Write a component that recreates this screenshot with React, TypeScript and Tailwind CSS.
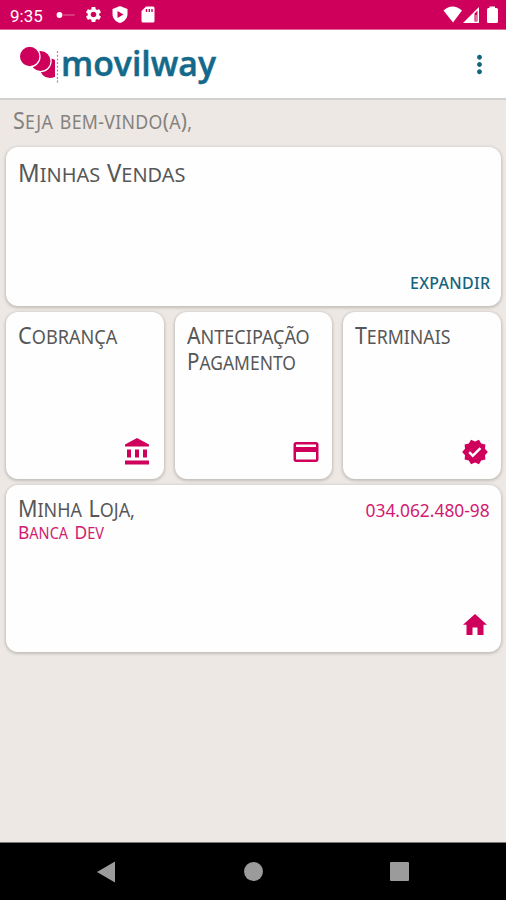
import React from "react";
import { MdCreditCard, MdVerified, MdSettings, MdMoreVert } from "react-icons/md";

const CARD = "bg-[#fefefe] rounded-[12px] shadow-[0_1px_3px_1px_rgba(0,0,0,0.18)]";

// Small-caps heading: each word has a taller first letter.
function Title({ text, className = "" }: { text: string; className?: string }) {
  return (
    <span className={"flex origin-left gap-[7px] uppercase whitespace-nowrap " + className}>
      {text.split(" ").map((word) => (
        <span key={word} className="block first-letter:text-[1.2em]">{word}</span>
      ))}
    </span>
  );
}

function Logo() {
  return (
    <svg width="210" height="48" viewBox="16 40 210 48" className="block">
      <clipPath id="edge"><rect x="16" y="40" width="39" height="48" /></clipPath>
      <g fill="#cf005c" stroke="#fff" strokeWidth="1.2" clipPath="url(#edge)">
        <circle cx="49.800" cy="68.300" r="10.400" />
        <circle cx="40.500" cy="61" r="10.600" />
        <circle cx="29.700" cy="56.500" r="10.300" />
      </g>
      <path d="M57.500 51V83" stroke="#db6c98" strokeWidth="1.2" strokeDasharray="2 1.700" />
      <text x="61" y="75.700" fontFamily="Open Sans, sans-serif" fontSize="33.500" fontWeight="600" fill="#14698a" stroke="#14698a" strokeWidth=".5" strokeLinejoin="round" textLength="155" lengthAdjust="spacingAndGlyphs">movilway</text>
    </svg>
  );
}

export default function App() {
  return (
    <div className="flex h-[900px] w-[506px] flex-col overflow-hidden bg-[#ede8e3] font-['Noto_Sans',sans-serif] text-[#575757]">
      <header className="flex h-[30px] shrink-0 items-center border-b border-[#df6496] bg-[#cf005c] pl-[10px] pr-[7px] text-white">
        <span className="w-[46px] pt-[2px] font-[Roboto,sans-serif] text-[17px] leading-[20px]">9:35</span>
        <svg width="20" height="8" viewBox="0 0 20 8" className="mr-[8px]">
          <circle cx="3.500" cy="4" r="2.900" fill="#fff" />
          <path d="M8 4H18" stroke="#e0508c" strokeWidth="2" strokeLinecap="round" opacity=".7" />
        </svg>
        <MdSettings className="size-[19px]" />
        <svg width="18" height="19" viewBox="0 0 18 19" className="ml-[8px]">
          <path fillRule="evenodd" d="M9 1 16.500 4V9C16.500 13.500 13 17 9 18 5 17 1.500 13.500 1.500 9V4ZM6.500 6V13L12.500 9.500Z" fill="#fff" />
        </svg>
        <svg width="16" height="19" viewBox="0 0 16 19" className="ml-[11px]">
          <path fillRule="evenodd" d="M6 1.500H13Q14.500 1.500 14.500 3V16Q14.500 17.500 13 17.500H3Q1.500 17.500 1.500 16V6ZM5.800 4V7H7.200V4ZM8.600 4V7H10V4ZM11.300 4V7H12.700V4Z" fill="#fff" />
        </svg>
        <svg width="56" height="20" viewBox="443 5 56 20" className="ml-auto">
          <path d="M443.500 10.500Q452.500 2.500 462 10.500L453 22.500Z" fill="#fff" />
          <path fillRule="evenodd" d="M479 7V23H463ZM474.500 13.500V21.500H477.500V10.500Z" fill="#fff" />
          <path d="M475.500 15h1.200v6h-1.200z" fill="#f0a0c2" />
          <path d="M489.500 6.500H495V8H496.500Q498 8 498 9.500V21.500Q498 23 496.500 23H488.500Q487 23 487 21.500V9.500Q487 8 488.500 8H489.500Z" fill="#fff" />
        </svg>
      </header>

      <div className="flex h-[70px] shrink-0 items-center justify-between border-b-2 border-[#d3cfcc] bg-white pl-[16px] pr-[12px]">
        <Logo />
        <MdMoreVert className="size-[29px] text-[#14647f]" />
      </div>

      <div className="h-[47px] shrink-0 pl-[13px] pt-[4px] text-[#85817e]">
        <p className="w-fit origin-left scale-x-[0.935] whitespace-nowrap text-[19px] uppercase leading-[32px] tracking-[0.300px] [word-spacing:2px] first-letter:text-[23px]">
          Seja bem-vindo<span className="text-[22px] leading-none">(</span>a<span className="text-[22px] leading-none">)</span>,
        </p>
      </div>

      <main className="flex flex-col gap-[6px] pl-[6px] pr-[5px]">
        <section className={CARD + " flex h-[159px] flex-col justify-between px-[12px] pb-[12px] pt-[9px]"}>
          <Title text="Minhas Vendas" className="scale-x-[0.973] text-[20.500px] leading-[34px]" />
          <span className="origin-right translate-x-[1px] scale-x-[0.94] self-end text-[17px] font-medium leading-[22px] tracking-[0.300px] text-[#14647f]">EXPANDIR</span>
        </section>

        <div className="grid h-[167px] grid-cols-3 gap-[11px]">
          <section className={CARD + " flex flex-col justify-between px-[12px] pb-[14px] pt-[7px]"}>
            <Title text="Cobrança" className="scale-x-[0.93] text-[19.500px] leading-[32px]" />
            <svg width="24" height="27" viewBox="0 0 24 27" className="mr-[3px] self-end" fill="#cf005c">
              <path d="M12 0 24 6.500V8.500H0V6.500ZM2 11.500H6V19.500H2ZM10 11.500H14V19.500H10ZM18 11.500H22V19.500H18ZM0 22.500H24V26.500H0Z" />
            </svg>
          </section>
          <section className={CARD + " flex flex-col justify-between px-[12px] pb-[12px] pt-[12px]"}>
            <span className="block text-[19.500px] uppercase leading-[26px]">
              <span className="block h-[26px] origin-left scale-x-[0.925] first-letter:text-[23px] first-letter:leading-none">Antecipação</span>
              <span className="block h-[26px] origin-left scale-x-[0.895] first-letter:text-[23px] first-letter:leading-none">Pagamento</span>
            </span>
            <MdCreditCard className="-mr-[1px] size-[30px] self-end text-[#cf005c]" />
          </section>
          <section className={CARD + " flex flex-col justify-between px-[12px] pb-[13px] pt-[7px]"}>
            <Title text="Terminais" className="scale-x-[0.91] text-[19.500px] leading-[32px]" />
            <MdVerified className="size-[28px] self-end text-[#cf005c]" />
          </section>
        </div>

        <section className={CARD + " flex h-[167px] flex-col justify-between px-[12px] pb-[17px] pt-[7px]"}>
          <div className="flex justify-between">
            <div>
              <Title text="Minha Loja," className="scale-x-[0.92] text-[19.500px] leading-[32px]" />
              <Title text="Banca Dev" className="-mt-[6px] scale-x-[0.925] text-[15.700px] leading-[24px] text-[#d01c70]" />
            </div>
            <span className="origin-right translate-x-[1px] scale-x-[0.95] text-[18.300px] leading-[35px] text-[#d01c70]">034.062.480-98</span>
          </div>
          <svg width="24" height="21" viewBox="0 0 24 21" className="mr-[2px] self-end" fill="#cf005c">
            <path d="M12 0 24 10.700H20.500V21H14.500V13.500H9.500V21H3.500V10.700H0Z" />
          </svg>
        </section>
      </main>

      <nav className="mt-auto flex h-[58px] shrink-0 items-center border-t border-[#777] bg-black pl-[97px]">
        <svg width="18" height="22" viewBox="0 0 18 22"><path d="M0 11 18 .5V21.500Z" fill="#9b9b9b" /></svg>
        <span className="ml-[129px] size-[19px] rounded-full bg-[#9b9b9b]" />
        <span className="ml-[127px] size-[19px] rounded-[1px] bg-[#9b9b9b]" />
      </nav>
    </div>
  );
}
